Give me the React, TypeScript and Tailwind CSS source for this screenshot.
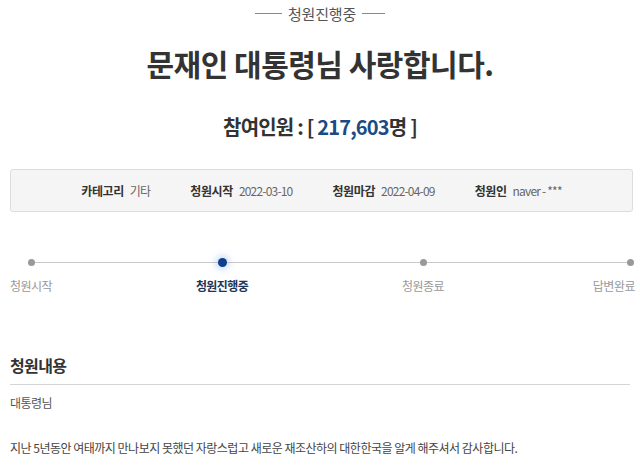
const FONT = { fontFamily: '"Noto Sans CJK KR", "Noto Sans", sans-serif' };

function InfoItem({ label, value }: { label: string; value: string }) {
  return (
    <div className="flex items-center gap-[6px]">
      <span className="font-bold text-[#333]">{label}</span>
      <span className="text-[#666] tracking-[-0.8px]">{value}</span>
    </div>
  );
}

function Dot({ active }: { active?: boolean }) {
  if (active) {
    return (
      <span className="w-[9px] h-[9px] rounded-full bg-[#0f3f8c] shadow-[0_0_6px_3px_rgba(120,170,230,0.35)]" />
    );
  }
  return <span className="w-[7px] h-[7px] my-px rounded-full bg-[#999]" />;
}

export default function App() {
  return (
    <div className="w-[640px] h-[469px] bg-white overflow-hidden" style={FONT}>
      {/* Status tag */}
      <div className="flex items-center justify-center gap-[6px] h-[26px]">
        <span className="w-[27px] h-px bg-[#888]" />
        <span className="text-[15px] leading-none text-[#555] tracking-[-0.2px]">청원진행중</span>
        <span className="w-[23px] h-px bg-[#888]" />
      </div>

      {/* Title */}
      <h1 className="mt-[18px] text-center text-[30px] leading-[38px] font-bold text-[#333] tracking-[-0.5px]">
        문재인 대통령님 사랑합니다.
      </h1>

      {/* Participants */}
      <div className="mt-[32px] text-center text-[20px] leading-[26px] font-bold text-[#333] tracking-[-0.8px]">
        참여인원 : [ <span className="text-[#1b4a86]">217,603</span>명 ]
      </div>

      {/* Info box */}
      <div className="mx-[10px] mt-[29px] w-[623px] h-[43px] rounded-[3px] border border-[#dcdcdc] bg-[#f5f5f5] flex items-center justify-center gap-[40px] text-[12px] tracking-[-0.4px]">
        <InfoItem label="카테고리" value="기타" />
        <InfoItem label="청원시작" value="2022-03-10" />
        <InfoItem label="청원마감" value="2022-04-09" />
        <InfoItem label="청원인" value="naver - ***" />
      </div>

      {/* Progress */}
      <div className="relative mt-[46px] h-[47px]">
        <div className="absolute left-[30px] right-[10px] top-[4px] h-px bg-[#c8c8c8]" />
        <div className="relative flex text-[12px] leading-[16px] text-[#999] tracking-[-0.5px] whitespace-nowrap">
          <div className="ml-[10px] w-[42px] flex flex-col items-center gap-[11px]">
            <Dot />
            <span>청원시작</span>
          </div>
          <div className="ml-[145px] w-[50px] flex flex-col items-center gap-[11px]">
            <Dot active />
            <span className="font-bold text-[#1f3556] tracking-[-0.6px]">청원진행중</span>
          </div>
          <div className="ml-[151px] w-[50px] flex flex-col items-center gap-[11px]">
            <Dot />
            <span>청원종료</span>
          </div>
          <div className="ml-[145px] w-[42px] flex flex-col items-end gap-[11px]">
            <span className="mr-[1px] flex"><Dot /></span>
            <span>답변완료</span>
          </div>
        </div>
      </div>

      {/* Content */}
      <div className="mx-[10px] mt-[49px]">
        <h2 className="text-[16px] leading-[22px] font-bold text-[#333] tracking-[-0.6px] pb-[8px] border-b border-[#d5d5d5]">
          청원내용
        </h2>
        <p className="mt-[9px] text-[12px] leading-[18px] text-[#555] tracking-[-0.5px]">대통령님</p>
        <p className="mt-[27px] text-[12px] leading-[18px] text-[#444] tracking-[-0.5px]">
          지난 5년동안 여태까지 만나보지 못했던 자랑스럽고 새로운 재조산하의 대한한국을 알게 해주셔서 감사합니다.
        </p>
      </div>
    </div>
  );
}
